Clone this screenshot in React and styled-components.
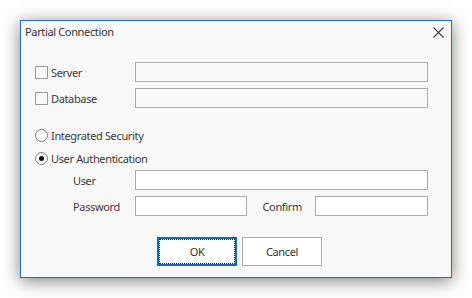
import React from "react";
import styled, { createGlobalStyle } from "styled-components";

const Global = createGlobalStyle`
    html, body {
        margin: 0;
        padding: 0;
        background: #fff;
    }
    * { box-sizing: border-box; }
`;

export default function App() {
    return (
        <Page>
            <Global />
            <Dialog>
                <TitleBar>
                    <Title>Partial Connection</Title>
                    <Close>
                        <svg width="11" height="11" viewBox="0 0 11 11">
                            <path d="M0.5 0.5 L10.5 10.5 M10.5 0.5 L0.5 10.5" stroke="#444" strokeWidth="1.1" />
                        </svg>
                    </Close>
                </TitleBar>
                <Body>
                    <Row>
                        <LeftCol>
                            <Check />
                            <Label>Server</Label>
                        </LeftCol>
                        <Field disabled width="293px" />
                    </Row>
                    <Row top="6px">
                        <LeftCol>
                            <Check />
                            <Label>Database</Label>
                        </LeftCol>
                        <Field disabled width="293px" />
                    </Row>
                    <Row top="17px">
                        <Radio />
                        <Label>Integrated Security</Label>
                    </Row>
                    <Row top="3px">
                        <Radio checked />
                        <Label>User Authentication</Label>
                    </Row>
                    <Row top="2px">
                        <IndentLabel>User</IndentLabel>
                        <Field width="293px" />
                    </Row>
                    <Row top="6px">
                        <IndentLabel>Password</IndentLabel>
                        <Field width="113px" />
                        <SideLabel>Confirm</SideLabel>
                        <Field width="113px" />
                    </Row>
                    <Buttons>
                        <Button focused>OK</Button>
                        <Button>Cancel</Button>
                    </Buttons>
                </Body>
            </Dialog>
        </Page>
    );
}

const Page = styled.div`
    padding: 20px;
    font-family: "Noto Sans", "Open Sans", sans-serif;
    font-size: 11px;
    letter-spacing: -0.35px;
    color: #3a3a3a;
`;

const Dialog = styled.div`
    width: 432px;
    height: 258px;
    background: #f8f8f8;
    border: 1px solid #1f6fc5;
    box-shadow: 0 3px 16px rgba(0, 0, 0, 0.5);
    display: flex;
    flex-direction: column;
`;

const TitleBar = styled.div`
    height: 20px;
    display: flex;
    align-items: center;
    justify-content: space-between;
    padding: 0 6px 0 4px;
`;

const Title = styled.span`
    font-size: 11px;
    color: #333;
`;

const Close = styled.div`
    width: 11px;
    height: 11px;
    display: flex;
    margin-top: 2px;
    margin-right: 1px;
`;

const Body = styled.div`
    padding: 21px 23px 0 14px;
    display: flex;
    flex-direction: column;
`;

const Row = styled.div`
    display: flex;
    align-items: center;
    height: 20px;
    margin-top: ${props => props.top || "0"};
`;

const LeftCol = styled.div`
    width: 100px;
    display: flex;
    align-items: center;
`;

const Check = styled.span`
    width: 13px;
    height: 13px;
    border: 1px solid #9a9a9a;
    background: #f8f8f8;
    margin-right: 3px;
`;

const Radio = styled.span`
    width: 13px;
    height: 13px;
    border-radius: 50%;
    border: 1px solid #7a7a7a;
    background: #fff;
    margin-right: 3px;
    display: flex;
    align-items: center;
    justify-content: center;
    &::after {
        content: "";
        width: 5px;
        height: 5px;
        border-radius: 50%;
        background: ${props => (props.checked ? "#111" : "transparent")};
    }
`;

const Label = styled.span`
    white-space: nowrap;
`;

const IndentLabel = styled.span`
    width: 100px;
    padding-left: 38px;
`;

const SideLabel = styled.span`
    width: 68px;
    padding-left: 15px;
`;

const Field = styled.div`
    width: ${props => props.width};
    height: 20px;
    border: 1px solid #ababab;
    background: ${props => (props.disabled ? "#f8f8f8" : "#fff")};
`;

const Buttons = styled.div`
    display: flex;
    gap: 5px;
    margin-top: 21px;
    padding-left: 122px;
`;

const Button = styled.div`
    position: relative;
    width: 80px;
    height: 29px;
    display: flex;
    align-items: center;
    justify-content: center;
    background: #fff;
    border: ${props => (props.focused ? "2px solid #1166c6" : "1px solid #ababab")};
    color: #333;
    &::after {
        content: "";
        display: ${props => (props.focused ? "block" : "none")};
        position: absolute;
        inset: 0;
        border: 1px dotted #222;
    }
`;
